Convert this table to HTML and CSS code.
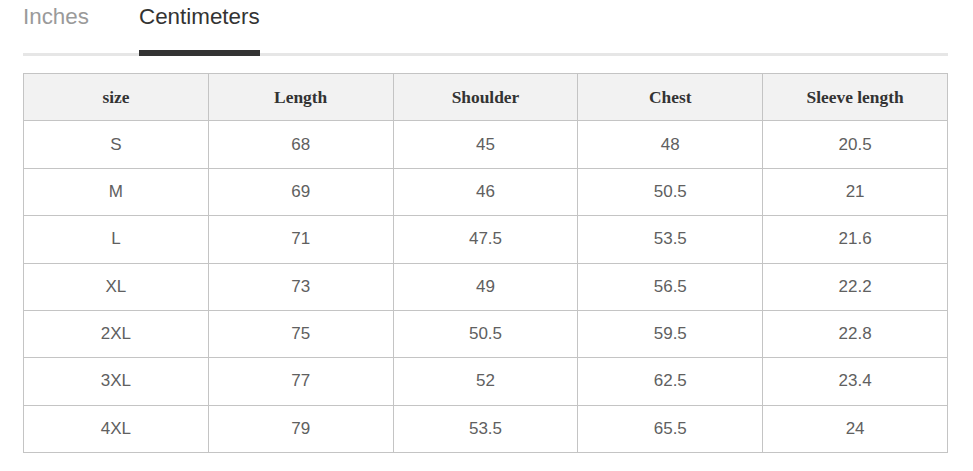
FILE: index.html
```html
<!DOCTYPE html>
<html>
<head>
<meta charset="utf-8">
<link rel="stylesheet" href="styles.css">
</head>
<body>
<div class="size-chart">
  <div class="tabs">
    <div class="tab">Inches</div>
    <div class="tab active">Centimeters</div>
  </div>
  <table class="chart">
    <thead>
      <tr><th>size</th><th>Length</th><th>Shoulder</th><th>Chest</th><th>Sleeve length</th></tr>
    </thead>
    <tbody>
      <tr><td>S</td><td>68</td><td>45</td><td>48</td><td>20.5</td></tr>
      <tr><td>M</td><td>69</td><td>46</td><td>50.5</td><td>21</td></tr>
      <tr><td>L</td><td>71</td><td>47.5</td><td>53.5</td><td>21.6</td></tr>
      <tr><td>XL</td><td>73</td><td>49</td><td>56.5</td><td>22.2</td></tr>
      <tr><td>2XL</td><td>75</td><td>50.5</td><td>59.5</td><td>22.8</td></tr>
      <tr><td>3XL</td><td>77</td><td>52</td><td>62.5</td><td>23.4</td></tr>
      <tr><td>4XL</td><td>79</td><td>53.5</td><td>65.5</td><td>24</td></tr>
    </tbody>
  </table>
</div>
</body>
</html>
```
FILE: styles.css
```css
html, body {
  margin: 0;
  padding: 0;
  background: #ffffff;
}
.size-chart {
  width: 925px;
  margin-left: 23px;
  font-family: "Liberation Sans", Arial, sans-serif;
}
.tabs {
  display: flex;
  gap: 50px;
  height: 53px;
  border-bottom: 3px solid #e6e6e6;
  box-sizing: content-box;
}
.tab {
  font-size: 22.4px;
  line-height: 25px;
  padding-top: 4px;
  color: #9a9a9a;
  height: 46px;
}
.tab.active {
  color: #333333;
  border-bottom: 6px solid #333333;
  margin-bottom: -3px;
}
.chart {
  margin-top: 17px;
  width: 925px;
  border-collapse: collapse;
  table-layout: fixed;
}
.chart th, .chart td {
  border: 1px solid #c4c4c4;
  text-align: center;
  padding: 0;
  height: 46.375px;
}
.chart th {
  background: #f2f2f2;
  font-family: "Liberation Serif", "Times New Roman", serif;
  font-weight: bold;
  font-size: 17.4px;
  color: #333333;
}
.chart td {
  font-size: 17px;
  color: #606060;
}
```
